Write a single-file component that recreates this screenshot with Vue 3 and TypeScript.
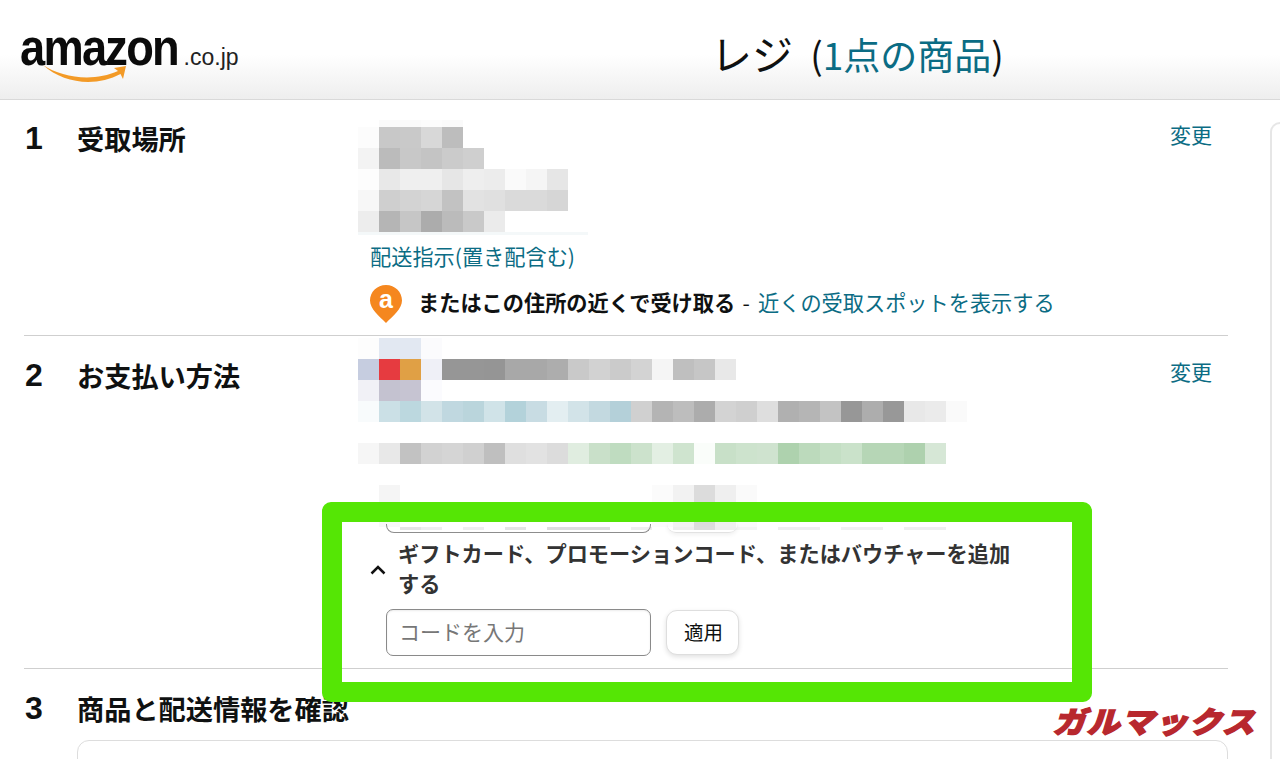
<script setup lang="ts">
// mosaic rows: each row is 21px tall, cells are 21px wide, '' = blank cell
const addressRows: string[][] = [
  ['#fff', '#fafafa', '#fafafa', '#fcfcfc', '#fafafa'],
  ['#fcfcfc', '#c8c8c8', '#c9c9c9', '#d8d8d8', '#bdbdbd'],
  ['#f3f3f3', '#bbbbbb', '#c8c8c8', '#c4c4c4', '#cbcbcb', '#cfcfcf'],
  ['#fdfdfd', '#e8e8e8', '#efefef', '#efefef', '#e6e6e6', '#eeeeee', '#ececec', '#fafafa', '#f5f5f5', '#e6e6e6'],
  ['#f7f7f7', '#cfcfcf', '#d3d3d3', '#d6d6d6', '#c2c2c2', '#e2e2e2', '#e0e0e0', '#dadada', '#dadada', '#d6d6d6'],
  ['#ededed', '#b5b5b5', '#c6c6c6', '#acacac', '#bbbbbb', '#c9c9c9', '#ebebeb']
]

const paymentRows: string[][] = [
  ['#fdfdfd', '#e2e8f2', '#e2e8f2', '#fbfbfd'],
  ['#c6cde0', '#e63b40', '#e0a045', '#eff0f7', '#969696', '#969696', '#959595', '#a8a8a8', '#a8a8a8', '#adadad', '#c9c9c9', '#d2d2d2', '#cbcbcb', '#d3d3d3', '#f5f5f5', '#bfbfbf', '#c6c6c6', '#e8e8e8'],
  ['#f1f1f6', '#c4c2d0', '#c6c4d2', '#fbfbfe'],
  ['#f8fbfc', '#cbe0e6', '#bcd8df', '#d2e3e8', '#c0d8e0', '#bad5dc', '#d0e3e8', '#b3d2da', '#c8dce3', '#e3eef1', '#d2e3e8', '#c3d9e0', '#b4d0d9', '#d0d0d0', '#b4b4b4', '#bdbdbd', '#acacac', '#d3d3d3', '#cfcfcf', '#dedede', '#b0b0b0', '#b5b5b5', '#c3c3c3', '#979797', '#adadad', '#989898', '#e8e8e8', '#ebebeb', '#fafafa'],
  [],
  ['#f6f6f6', '#e8e8e8', '#c2c2c2', '#d2d2d2', '#d5d5d5', '#d0d0d0', '#bfbfbf', '#dfdfdf', '#e2e2e2', '#dcdcdc', '#e0ede0', '#c9e0c9', '#bfdcc0', '#cce2cc', '#e3efe3', '#cfe4cf', '#fafdfa', '#c8e0c8', '#cde3cd', '#cfe3cf', '#aed2ae', '#bcdabc', '#c4dfc4', '#cae2ca', '#b6d6b6', '#b6d6b6', '#aed1ae', '#d6e7d6'],
  [],
  ['', '#f5f5f5', '', '', '', '', '', '', '', '', '', '', '', '', '#fbfbfb', '#f2f2f2', '#dcdcdc', '#efefef', '#fafafa'],
  ['', '#f8f8f8', '', '', '', '', '', '', '', '', '', '', '', '', '#fbfbfb', '#f2f2f2', '#dcdcdc', '#efefef', '#fafafa']
]

const stripCells = ['', '', '#e4e4e4', '#eeeeee', '', '#eeeeee', '', '#e4e4e4', '', '#dddddd', '#dddddd', '#dddddd', '', '#eeeeee', '', '#eeeeee', '#dddddd', '#eeeeee', '#f4f4f4', '', '#eeeeee', '#eeeeee', '', '#f0f0f0', '#f0f0f0', '', '#eeeeee', '#eeeeee', '']
</script>

<template>
  <div class="page">
    <header class="top">
      <div class="logo">
        <span class="logo-word">amazon</span>
        <span class="logo-tld">.co.jp</span>
        <svg class="smile" width="86" height="20" viewBox="0 0 86 20">
          <path d="M1 1 C20 14 52 18 76 7 L72 4 L84 2 L81 15 L78.500 10 C54 23 22 20 1 1 Z" fill="#f39a26" />
        </svg>
      </div>
      <h1 class="title">レジ <span class="count">(<span class="teal">1点の商品</span>)</span></h1>
    </header>

    <div class="body">
      <main class="steps">
        <section class="step step-address">
          <div class="num">1</div>
          <h2 class="step-title">受取場所</h2>
          <div class="content">
            <div class="mosaic">
              <div v-for="(row, r) in addressRows" :key="r" class="mosaic-row" :class="{ 'row-thin': r === 0 }">
                <i v-for="(c, i) in row" :key="i" :style="{ background: c }"></i>
              </div>
              <div class="fade-line"></div>
            </div>
            <a class="link note">配送指示(置き配含む)</a>
            <div class="pickup">
              <svg class="pin" width="32" height="38" viewBox="0 0 32 38">
                <path d="M16 0 C7 0 0 7 0 15.500 C0 24 9 31 16 38 C23 31 32 24 32 15.500 C32 7 25 0 16 0 Z" fill="#f5871f" />
                <text x="16" y="23" text-anchor="middle" class="pin-a">a</text>
              </svg>
              <span class="pickup-text"><b>またはこの住所の近くで受け取る</b> - <a class="link">近くの受取スポットを表示する</a></span>
            </div>
          </div>
          <a class="link change">変更</a>
        </section>

        <section class="step step-payment">
          <div class="num">2</div>
          <h2 class="step-title">お支払い方法</h2>
          <div class="content">
            <div class="mosaic">
              <div v-for="(row, r) in paymentRows" :key="r" class="mosaic-row">
                <i v-for="(c, i) in row" :key="i" :style="{ background: c }"></i>
              </div>
              <div class="mosaic-row row-strip">
                <i v-for="(c, i) in stripCells" :key="i" :style="{ background: c }"></i>
              </div>
            </div>
            <div class="ghost">
              <div class="ghost-input"></div>
              <div class="ghost-btn"></div>
            </div>
            <div class="gift">
              <svg class="chevron" width="16" height="10" viewBox="0 0 16 10">
                <path d="M1.500 8.500 L8 2 L14.500 8.500" fill="none" stroke="#111" stroke-width="2.500" />
              </svg>
              <div class="gift-text">ギフトカード、プロモーションコード、またはバウチャーを追加する</div>
            </div>
            <div class="code-row">
              <input class="code-input" type="text" placeholder="コードを入力" />
              <button class="apply" type="button">適用</button>
            </div>
          </div>
          <a class="link change">変更</a>
        </section>

        <section class="step step-review">
          <div class="num">3</div>
          <h2 class="step-title">商品と配送情報を確認</h2>
          <div class="review-card"></div>
        </section>
      </main>
      <aside class="side"></aside>
    </div>

    <div class="highlight"></div>
    <div class="mark">ガルマックス</div>
  </div>
</template>

<style scoped>
.page {
  position: relative;
  width: 1280px;
  height: 759px;
  overflow: hidden;
  background: #fff;
  color: #0f1111;
  font-family: "Noto Sans CJK JP", "Liberation Sans", sans-serif;
}

.top {
  display: flex;
  align-items: flex-start;
  height: 100px;
  box-sizing: border-box;
  background: linear-gradient(#fff 0, #fff 55%, #eeeeee 100%);
  border-bottom: 1px solid #d9d9d9;
}

.logo {
  position: relative;
  display: flex;
  align-items: baseline;
  width: 691px;
  flex: none;
  padding: 17px 0 0 20px;
  box-sizing: border-box;
  font-family: "Liberation Sans", sans-serif;
}

.logo-word {
  font-size: 52px;
  line-height: 60px;
  font-weight: 700;
  letter-spacing: -2px;
  color: #0b0b0b;
  transform: scaleX(0.87);
  transform-origin: left center;
}

.logo-tld {
  margin-left: -18px;
  font-size: 23px;
  color: #222;
}

.smile {
  position: absolute;
  left: 42px;
  top: 64px;
}

.title {
  margin: 24px 0 0 20px;
  font-size: 41px;
  line-height: 56px;
  font-weight: 400;
  white-space: nowrap;
}

.count {
  margin-left: 8px;
  font-size: 37px;
}

.teal,
.link {
  color: #0b6c84;
}

.body {
  display: flex;
}

.steps {
  width: 1204px;
  margin-left: 24px;
  flex: none;
}

.step {
  display: grid;
  grid-template-columns: 53px 281px 1fr 58px;
  border-bottom: 1px solid #cfcfcf;
}

.step-address {
  height: 236px;
  box-sizing: border-box;
  padding-top: 20px;
}

.step-payment {
  height: 333px;
  box-sizing: border-box;
  padding-top: 2px;
}

.step-review {
  padding-top: 19px;
  border-bottom: 0;
}

.num,
.step-title {
  margin: 0;
  font-size: 27.200px;
  line-height: 40px;
  font-weight: 700;
}

.step-address .step-title {
  margin-top: -2px;
}

.step-payment .step-title {
  margin-top: 17px;
}

.num {
  padding-left: 1px;
  font-family: "Liberation Sans", sans-serif;
  font-size: 32px;
}

.step-address .num {
  margin-top: -2px;
}

.step-payment .num {
  margin-top: 17px;
}

.mosaic-row {
  display: flex;
  height: 21px;
}

.mosaic-row i {
  display: block;
  width: 21px;
  flex: none;
}

.row-thin {
  height: 7px;
}

.row-strip {
  height: 3px;
}

.fade-line {
  height: 3px;
  width: 230px;
  background: #f4f8f9;
}

.note {
  display: block;
  margin: 6px 0 0 12px;
  font-size: 21.200px;
  line-height: 30px;
}

.pickup {
  display: flex;
  align-items: center;
  gap: 16px;
  margin: 14px 0 0 13px;
}

.pin {
  flex: none;
  margin-left: -1px;
}

.pin-a {
  fill: #fff;
  font-family: "Liberation Sans", sans-serif;
  font-size: 25px;
  font-weight: 700;
}

.pickup-text {
  font-size: 21.200px;
  line-height: 36px;
  margin-top: -5px;
  word-spacing: 2.500px;
  white-space: nowrap;
}

.pickup-text .link {
  margin-left: 1px;
}

.change {
  font-size: 21px;
  line-height: 30px;
  text-align: right;
  padding-right: 16px;
  white-space: nowrap;
}

.step-address .change {
  margin-top: -1px;
}

.step-payment .change {
  margin-top: 18px;
}

.ghost {
  display: flex;
  gap: 16px;
  height: 9px;
  margin: -6px 0 0 28px;
}

.ghost-input {
  width: 263px;
  height: 8px;
  border: 1px solid #8d8d8d;
  border-top: 0;
  border-radius: 0 0 8px 8px;
}

.ghost-btn {
  width: 71px;
  height: 8px;
  border-bottom: 1px solid #e2e2e2;
  border-radius: 0 0 10px 10px;
  box-shadow: 0 2px 4px rgba(0, 0, 0, 0.06);
}

.gift {
  display: flex;
  align-items: center;
  gap: 12px;
  margin: 5px 0 0 12px;
  width: 660px;
}

.chevron {
  flex: none;
  margin-top: 4px;
}

.gift-text {
  width: 626px;
  font-size: 21.200px;
  line-height: 30px;
  font-weight: 700;
  color: #333;
}

.code-row {
  display: flex;
  align-items: center;
  gap: 15px;
  margin: 11px 0 0 28px;
}

.code-input {
  width: 265px;
  height: 47px;
  box-sizing: border-box;
  padding: 0 12px 3px;
  border: 1px solid #8a8a8a;
  border-radius: 7px;
  font-family: inherit;
  font-size: 21px;
  outline: none;
  box-shadow: inset 0 1px 2px rgba(0, 0, 0, 0.08);
}

.code-input::placeholder {
  color: #777;
}

.apply {
  width: 73px;
  height: 45px;
  padding: 0 0 2px 2px;
  border: 1px solid #dedede;
  border-radius: 11px;
  background: #fff;
  color: #0f1111;
  font-family: inherit;
  font-size: 19.500px;
  box-shadow: 0 2px 5px rgba(0, 0, 0, 0.12);
}

.review-card {
  grid-column: 2 / 5;
  grid-row: 2;
  height: 80px;
  margin-top: 12px;
  border: 1px solid #dddddd;
  border-radius: 12px;
}

.side {
  width: 20px;
  height: 700px;
  margin: 22px 0 0 42px;
  border: 2px solid #e6e6e6;
  border-right: 0;
  border-radius: 10px 0 0 0;
  flex: none;
}

.highlight {
  position: absolute;
  left: 322px;
  top: 502px;
  width: 770px;
  height: 200px;
  box-sizing: border-box;
  border: 20px solid #55e605;
  border-radius: 9px;
}

.mark {
  position: absolute;
  left: 1056px;
  top: 701px;
  font-size: 33px;
  line-height: 38px;
  font-weight: 900;
  letter-spacing: 1px;
  white-space: nowrap;
  color: #b8282e;
  -webkit-text-stroke: 1.500px #b8282e;
  transform: skewX(-16deg) scaleY(0.9);
}
</style>

<style>
html,
body {
  margin: 0;
  overflow: hidden;
}
</style>
